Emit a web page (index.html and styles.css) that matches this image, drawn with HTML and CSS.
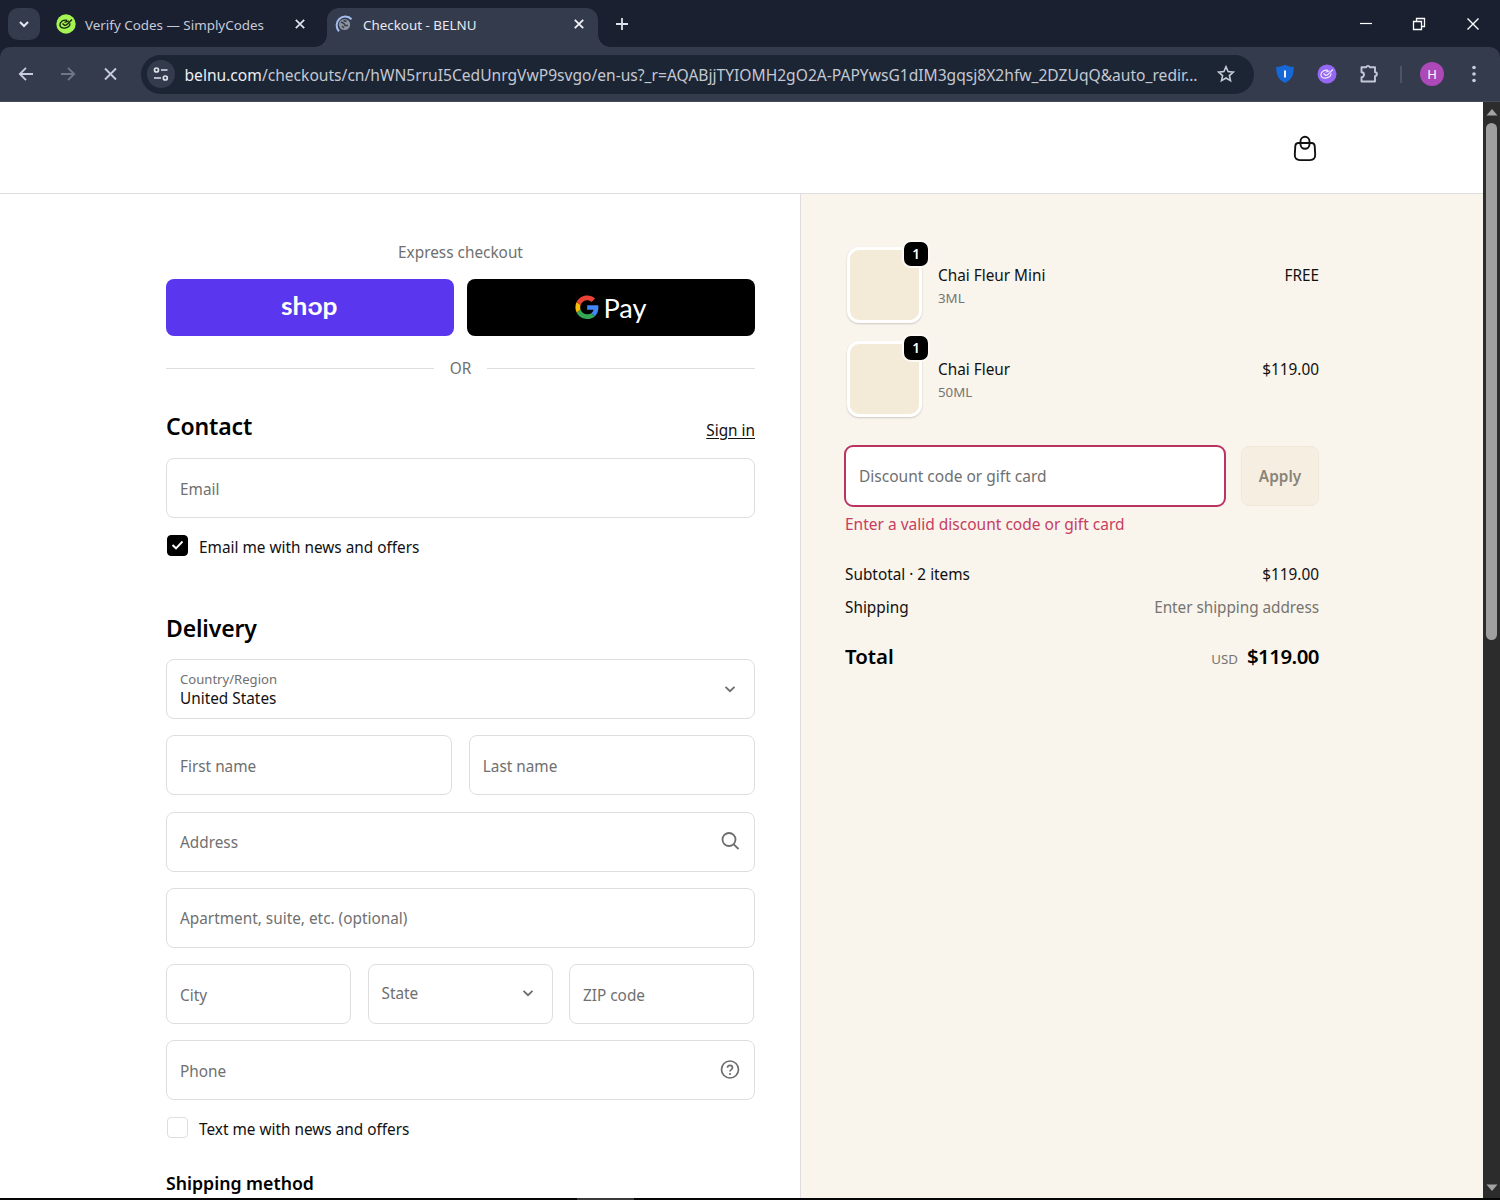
FILE: index.html
```
<!DOCTYPE html>
<html lang="en">
<head>
    <meta charset="UTF-8">
    <meta name="viewport" content="width=device-width, initial-scale=1.0">
    <title>Checkout - BELNU</title>
    <link rel="stylesheet" href="styles.css">
</head>
<body>
    <div class="tabs">
        <div class="tab-search">
            <svg width="12" height="8" viewBox="0 0 12 8"><path d="M2 2l4 4 4-4" fill="none" stroke="#e4e8f2" stroke-width="2"/></svg>
        </div>
        <div class="tab">
            <svg width="20" height="20" viewBox="0 0 20 20">
                <circle cx="10" cy="10" r="9.7" fill="#a5f453"/>
                <path d="M11 6.300c-4-.8-7.200 1.700-7.100 4.700.1 2.700 3 3.600 5.700 2.900 2.800-.7 4.600-2.300 4.300-4.600M6.500 9.500l2 1.800c1.500.2 2.500-.5 3.300-1.600l4.200-4.200M8.500 8.300l4.200-1.500" fill="none" stroke="#16240d" stroke-width="1.400"/>
            </svg>
            <span class="tab-name">Verify Codes — SimplyCodes</span>
            <svg class="tab-x" width="12" height="12" viewBox="0 0 12 12"><path d="M1.800 1.800l8.400 8.400M10.200 1.800l-8.400 8.400" stroke="#dfe3ee" stroke-width="1.700"/></svg>
        </div>
        <div class="tab active">
            <svg width="20" height="20" viewBox="0 0 20 20">
                <circle cx="10.500" cy="10.500" r="5.600" fill="#8d939f"/>
                <path d="M7 8l3 1.500 1 2h3M9.500 6.500l3 1M8 12l2 2" fill="none" stroke="#343c4d" stroke-width="1.500"/>
                <path d="M5 17.200A8.400 8.400 0 1 1 17.500 5.300" fill="none" stroke="#a5bff0" stroke-width="2"/>
            </svg>
            <span class="tab-name">Checkout - BELNU</span>
            <svg class="tab-x" width="12" height="12" viewBox="0 0 12 12"><path d="M1.800 1.800l8.400 8.400M10.200 1.800l-8.400 8.400" stroke="#f0f2f8" stroke-width="1.800"/></svg>
        </div>
        <svg class="new-tab" width="14" height="14" viewBox="0 0 14 14"><path d="M7 1v12M1 7h12" stroke="#dfe3ee" stroke-width="1.800"/></svg>
        <div class="window-buttons">
            <svg width="12" height="12" viewBox="0 0 12 12"><path d="M0 5.500h12" stroke="#fff" stroke-width="1.200"/></svg>
            <svg width="14" height="14" viewBox="0 0 14 14"><path d="M1.500 4.500h8v8h-8zM4.500 4.500v-3h8v8h-3" fill="none" stroke="#fff" stroke-width="1.300"/></svg>
            <svg width="14" height="14" viewBox="0 0 14 14"><path d="M1.500 1.500l11 11M12.500 1.500l-11 11" stroke="#fff" stroke-width="1.400"/></svg>
        </div>
    </div>

    <div class="toolbar">
        <div class="nav-icons">
            <svg width="16" height="16" viewBox="0 0 16 16"><path d="M15 8H2M8 1.800L1.800 8 8 14.200" fill="none" stroke="#c8cedc" stroke-width="1.800"/></svg>
            <svg width="16" height="16" viewBox="0 0 16 16"><path d="M1 8h13M8 1.800L14.200 8 8 14.200" fill="none" stroke="#6f7686" stroke-width="1.800"/></svg>
            <svg width="16" height="16" viewBox="0 0 16 16"><path d="M3 2.500l11 11M14 2.500l-11 11" stroke="#c8cedc" stroke-width="1.800"/></svg>
        </div>
        <div class="omnibox">
            <div class="site-info">
                <svg width="16" height="14" viewBox="0 0 16 14"><g fill="none" stroke="#dde1ea" stroke-width="1.700"><circle cx="3.500" cy="3" r="2"/><path d="M8 3h6.500M1 11h7"/><circle cx="12.300" cy="11" r="2"/></g></svg>
            </div>
            <span class="url"><b>belnu.com</b>/checkouts/cn/hWN5rruI5CedUnrgVwP9svgo/en-us?_r=AQABjjTYIOMH2gO2A-PAPYwsG1dIM3gqsj8X2hfw_2DZUqQ&amp;auto_redir...</span>
            <svg class="star" width="20" height="20" viewBox="0 0 20 20"><path d="M10 2.800l2.100 4.800 5.200.5-3.900 3.500 1.100 5.100L10 14l-4.500 2.700 1.100-5.100-3.900-3.500 5.200-.5z" fill="none" stroke="#c6cbd8" stroke-width="1.600"/></svg>
        </div>
        <div class="extensions">
            <svg width="20" height="20" viewBox="0 0 20 20"><path d="M10 .8c2 1.200 5 2 8.700 2.200.3 7-1.500 12.500-8.700 16C2.800 15.500 1 10 1.300 3 5 2.800 8 2 10 .8z" fill="#1668d8"/><path d="M10 6.500v7" stroke="#fff" stroke-width="1.900"/></svg>
            <svg width="20" height="20" viewBox="0 0 20 20">
                <circle cx="10" cy="10" r="9.500" fill="#9468f3"/>
                <path d="M11 6.300c-4-.8-7.200 1.700-7.100 4.700.1 2.700 3 3.600 5.700 2.900 2.800-.7 4.600-2.300 4.300-4.600M6.500 9.500l2 1.800c1.500.2 2.500-.5 3.300-1.600l4.200-4.200M8.500 8.300l4.200-1.500" fill="none" stroke="#f0e8ff" stroke-width="1.200"/>
            </svg>
            <svg width="20" height="20" viewBox="0 0 20 20"><path d="M2.500 3.200h4.700a1.900 1.900 0 0 1 3.600 0h5.200v5a1.900 1.900 0 0 1 0 3.800v5.500H2.500v-4.300a2.200 2.200 0 0 0 0-5z" fill="none" stroke="#c2c8d6" stroke-width="1.900" stroke-linejoin="round"/></svg>
            <span class="separator"></span>
            <span class="avatar">H</span>
            <svg width="6" height="18" viewBox="0 0 6 18" fill="#c8cedc"><circle cx="3" cy="2.500" r="1.800"/><circle cx="3" cy="9" r="1.800"/><circle cx="3" cy="15.500" r="1.800"/></svg>
        </div>
    </div>

    <div class="window">
        <div class="page">
            <header>
                <svg width="24" height="27" viewBox="0 0 24 27"><g fill="none" stroke="#111" stroke-width="1.900"><path d="M5.500 8h13q3 0 3.200 3l.5 8.500q.2 5.600-5.200 5.600H7q-5.400 0-5.200-5.600l.5-8.500q.2-3 3.200-3z"/><rect x="7.500" y="1.800" width="9" height="12" rx="4.500"/></g></svg>
            </header>
            <main>
                <div class="form">
                    <p class="express">Express checkout</p>
                    <div class="pay-buttons">
                        <div class="pay shop">
                            <svg width="60" height="34" viewBox="0 0 60 34">
                                <text x="1" y="23.500" font-size="25.500" textLength="56.500" lengthAdjust="spacingAndGlyphs">shop</text>
                                <path d="M27.500 16.500h6" stroke="#5a37ef" stroke-width="2"/>
                            </svg>
                        </div>
                        <div class="pay gpay">
                            <svg width="74" height="36" viewBox="0 0 74 36">
                                <g transform="translate(1.400 5.500) scale(.49)">
                                    <path fill="#4285f4" d="M46.980 24.550c0-1.570-.15-3.090-.38-4.550H24v9.020h12.940c-.58 2.960-2.260 5.480-4.780 7.180l7.730 6c4.510-4.180 7.090-10.360 7.090-17.650z"/>
                                    <path fill="#34a853" d="M24 48c6.480 0 11.930-2.130 15.890-5.810l-7.730-6c-2.150 1.450-4.920 2.300-8.160 2.300-6.260 0-11.570-4.220-13.470-9.910l-7.980 6.190C6.510 42.620 14.620 48 24 48z"/>
                                    <path fill="#fbbc05" d="M10.530 28.590c-.48-1.450-.76-2.990-.76-4.590s.27-3.140.76-4.590l-7.980-6.190C.92 16.460 0 20.120 0 24s.92 7.540 2.560 10.780z"/>
                                    <path fill="#ea4335" d="M24 9.500c3.540 0 6.710 1.220 9.210 3.600l6.850-6.850C35.900 2.380 30.470 0 24 0 14.620 0 6.510 5.380 2.560 13.220l7.980 6.190C12.430 13.720 17.740 9.500 24 9.500z"/>
                                </g>
                                <text x="29.500" y="28" font-size="27.500" textLength="43" lengthAdjust="spacingAndGlyphs">Pay</text>
                            </svg>
                        </div>
                    </div>
                    <div class="or"><span>OR</span></div>

                    <div class="section-head">
                        <h2>Contact</h2>
                        <a class="sign-in">Sign in</a>
                    </div>
                    <div class="field"><span>Email</span></div>
                    <div class="check-row">
                        <span class="checkbox checked"><svg width="13" height="10" viewBox="0 0 13 10"><path d="M1.500 5l3.500 3.300L11.500 1.500" fill="none" stroke="#fff" stroke-width="1.900"/></svg></span>
                        <span>Email me with news and offers</span>
                    </div>

                    <h2 class="delivery">Delivery</h2>
                    <div class="fields">
                        <div class="field country">
                            <div class="stack">
                                <small>Country/Region</small>
                                <span class="value">United States</span>
                            </div>
                            <svg width="14" height="10" viewBox="0 0 14 10"><path d="M2.500 2.800L7 7.200l4.500-4.400" fill="none" stroke="#6d6d6d" stroke-width="1.800"/></svg>
                        </div>
                        <div class="row two">
                            <div class="field"><span>First name</span></div>
                            <div class="field"><span>Last name</span></div>
                        </div>
                        <div class="field">
                            <span>Address</span>
                            <svg width="20" height="20" viewBox="0 0 20 20"><g fill="none" stroke="#6d6d6d" stroke-width="1.800"><circle cx="9" cy="8.500" r="6.500"/><path d="M13.500 13.200l5 4.800"/></g></svg>
                        </div>
                        <div class="field"><span>Apartment, suite, etc. (optional)</span></div>
                        <div class="row three">
                            <div class="field"><span>City</span></div>
                            <div class="field state">
                                <span>State</span>
                                <svg width="14" height="10" viewBox="0 0 14 10"><path d="M2.500 2.800L7 7.200l4.500-4.400" fill="none" stroke="#6d6d6d" stroke-width="1.800"/></svg>
                            </div>
                            <div class="field"><span>ZIP code</span></div>
                        </div>
                        <div class="field">
                            <span>Phone</span>
                            <svg width="20" height="20" viewBox="0 0 20 20"><g fill="none" stroke="#6d6d6d" stroke-width="1.700"><circle cx="10" cy="9.500" r="8.500"/><path d="M7.500 7.800c0-3.400 5-3.200 5 0 0 1.900-2.500 1.700-2.500 3.600"/></g><circle cx="10" cy="14" r="1.100" fill="#6d6d6d"/></svg>
                        </div>
                    </div>
                    <div class="check-row">
                        <span class="checkbox"></span>
                        <span>Text me with news and offers</span>
                    </div>
                    <h3>Shipping method</h3>
                </div>

                <div class="summary">
                    <div class="item">
                        <div class="thumb"><span class="badge">1</span></div>
                        <div class="item-text">
                            <span>Chai Fleur Mini</span>
                            <small>3ML</small>
                        </div>
                        <span class="price">FREE</span>
                    </div>
                    <div class="item">
                        <div class="thumb"><span class="badge">1</span></div>
                        <div class="item-text">
                            <span>Chai Fleur</span>
                            <small>50ML</small>
                        </div>
                        <span class="price">$119.00</span>
                    </div>
                    <div class="discount">
                        <div class="code"><span>Discount code or gift card</span></div>
                        <div class="apply">Apply</div>
                    </div>
                    <p class="error">Enter a valid discount code or gift card</p>
                    <div class="line"><span>Subtotal · 2 items</span><span>$119.00</span></div>
                    <div class="line"><span>Shipping</span><span class="muted">Enter shipping address</span></div>
                    <div class="total"><strong>Total</strong><span><small>USD</small><strong class="amount">$119.00</strong></span></div>
                </div>
            </main>
        </div>
        <div class="scrollbar">
            <svg width="12" height="7" viewBox="0 0 12 7"><path d="M6 0l5.500 6.500H.5z" fill="#a3a3a3"/></svg>
            <div class="thumb-bar"></div>
            <svg width="12" height="7" viewBox="0 0 12 7"><path d="M6 7L.5.5h11z" fill="#a3a3a3"/></svg>
        </div>
    </div>
    <div class="taskbar-edge"><span></span></div>
</body>
</html>
```
FILE: styles.css
```
* {
    box-sizing: border-box;
}

body {
    margin: 0;
    height: 1200px;
    overflow: hidden;
    display: flex;
    flex-direction: column;
    background: #1a2030;
    font-family: "Noto Sans", "Open Sans", sans-serif;
    font-size: 15.35px;
    color: #111;
}

svg {
    display: block;
    flex: none;
}

p, h2, h3 {
    margin: 0;
}

span, small, strong, a {
    white-space: nowrap;
}

/* tab strip */
.tabs {
    display: flex;
    height: 47px;
    padding-left: 8px;
    flex: none;
}

.tab-search {
    width: 32px;
    height: 32px;
    margin-top: 8px;
    border-radius: 10px;
    background: #343b4d;
    display: flex;
    align-items: center;
    justify-content: center;
}

.tab {
    display: flex;
    align-items: center;
    width: 273px;
    height: 32px;
    margin-top: 8px;
    padding: 0 7px 0 16px;
    color: #c5cad8;
    font-size: 13.4px;
}

.tab.active {
    position: relative;
    width: 271px;
    height: 39px;
    margin-left: 14px;
    padding: 0 13px 7px 7px;
    border-radius: 12px 12px 0 0;
    background: #343b4d;
    color: #e6e9f2;
}

.tab.active::before,
.tab.active::after {
    content: "";
    position: absolute;
    bottom: 0;
    width: 12px;
    height: 12px;
}

.tab.active::before {
    left: -12px;
    background: radial-gradient(circle at 0 0, transparent 11.5px, #343b4d 12px);
}

.tab.active::after {
    right: -12px;
    background: radial-gradient(circle at 100% 0, transparent 11.5px, #343b4d 12px);
}

.tab-name {
    margin-left: 9px;
    padding-top: 1px;
}

.tab-x {
    margin-left: auto;
}

.new-tab {
    margin: 17px 0 0 17px;
}

.window-buttons {
    display: flex;
    align-items: center;
    gap: 40px;
    margin-left: auto;
    padding-right: 20px;
    height: 47px;
}

/* toolbar */
.toolbar {
    display: flex;
    align-items: center;
    flex: none;
    height: 55px;
    padding-left: 18px;
    background: #343b4d;
    border-radius: 10px 10px 0 0;
    border-bottom: 1px solid #454b5a;
}

.nav-icons {
    display: flex;
    gap: 26px;
}

.omnibox {
    display: flex;
    align-items: center;
    width: 1113px;
    height: 39px;
    margin-left: 23px;
    padding: 0 18px 0 6px;
    border-radius: 20px;
    background: #1c2534;
}

.site-info {
    display: flex;
    align-items: center;
    justify-content: center;
    width: 28px;
    height: 28px;
    border-radius: 50%;
    background: #343b4d;
}

.url {
    margin-left: 9.5px;
    padding-top: 1px;
    color: #c3c8d3;
    font-size: 15.6px;
}

.url b {
    font-weight: 400;
    color: #eceff5;
}

.star {
    margin-left: auto;
}

.extensions {
    display: flex;
    align-items: center;
    margin-left: 21px;
    gap: 22px;
}

.separator {
    width: 2px;
    height: 17px;
    margin: 0 -4px 0 -1px;
    background: #4d5466;
}

.avatar {
    width: 24px;
    height: 24px;
    border-radius: 50%;
    background: #ad48b8;
    color: #fff;
    font-size: 13px;
    line-height: 24px;
    text-align: center;
}

.extensions svg:last-child {
    margin-left: 5px;
}

/* page */
.window {
    display: flex;
    height: 1096px;
    flex: none;
}

.page {
    width: 1483px;
    background: #fff;
}

header {
    display: flex;
    justify-content: flex-end;
    height: 92px;
    padding: 33px 166px 0 0;
    border-bottom: 1px solid #dedede;
}

main {
    display: flex;
    height: 1004px;
}

.form {
    width: 800px;
    height: 1004px;
    overflow: hidden;
    padding: 46px 45px 0 166px;
}

.express {
    height: 24px;
    line-height: 24px;
    text-align: center;
    color: #707070;
}

.pay-buttons {
    display: flex;
    gap: 13px;
    margin-top: 15px;
}

.pay {
    flex: 1;
    height: 57px;
    display: flex;
    align-items: center;
    justify-content: center;
    border-radius: 8px;
}

.shop {
    background: #5a37ef;
}

.shop text {
    font-family: Lato, sans-serif;
    font-weight: 700;
    fill: #fff;
}

.gpay {
    background: #000;
}

.gpay text {
    font-family: Lato, sans-serif;
    fill: #fff;
}

.or {
    display: flex;
    align-items: center;
    gap: 16px;
    height: 24px;
    margin-top: 20px;
    color: #707070;
}

.or::before,
.or::after {
    content: "";
    flex: 1;
    height: 1px;
    background: #dedede;
}

.section-head {
    display: flex;
    justify-content: space-between;
    height: 32px;
    margin-top: 30px;
    margin-bottom: 16px;
}

h2 {
    font-size: 23px;
    font-weight: 600;
    line-height: 32px;
    letter-spacing: -0.15px;
    color: #000;
}

.sign-in {
    margin-top: 8px;
    line-height: 24px;
    text-decoration: underline;
    text-underline-offset: 2px;
}

.field {
    display: flex;
    align-items: center;
    justify-content: space-between;
    height: 60px;
    padding: 1px 14px 0 13px;
    border: 1px solid #dedede;
    border-radius: 8px;
    color: #707070;
}

.field svg {
    margin-top: -2px;
}

.check-row {
    display: flex;
    align-items: center;
    gap: 11px;
    height: 24px;
    margin-top: 15px;
    padding-left: 1px;
}

.check-row span:last-child {
    margin-top: 4px;
}

.checkbox {
    display: flex;
    align-items: center;
    justify-content: center;
    width: 21px;
    height: 21px;
    border: 1px solid #dedede;
    border-radius: 4px;
}

.checked {
    background: #000;
    border-color: #000;
}

.delivery {
    margin-top: 55px;
    margin-bottom: 15px;
}

.fields {
    display: flex;
    flex-direction: column;
    gap: 16.25px;
}

.country {
    padding-top: 0;
}

.country svg,
.state svg {
    margin-top: 0;
    margin-right: 3px;
}

.stack {
    display: flex;
    flex-direction: column;
}

.stack small {
    font-size: 13.1px;
    line-height: 18px;
}

.value {
    line-height: 21px;
    color: #111;
}

.row {
    display: grid;
    gap: 16.5px;
}

.two {
    grid-template-columns: 1fr 1fr;
}

.three {
    grid-template-columns: 1fr 1fr 1fr;
    padding-right: 1px;
}

.state {
    padding-top: 0;
    padding-bottom: 2px;
}

h3 {
    margin-top: 30px;
    font-size: 17.7px;
    line-height: 28px;
    font-weight: 600;
    color: #000;
}

/* order summary */
.summary {
    width: 683px;
    padding: 45px 164px 0 44px;
    background: #f9f4ec;
    border-left: 1px solid #dedede;
}

.item {
    display: flex;
    height: 94px;
    padding-top: 8px;
    padding-left: 2px;
}

.thumb {
    position: relative;
    width: 75px;
    height: 76px;
    border: 3px solid #fff;
    border-radius: 12px;
    background: #f3ebd8;
    box-shadow: 0 1px 2px rgba(0, 0, 0, 0.18);
}

.badge {
    position: absolute;
    top: -8px;
    right: -9px;
    width: 24px;
    height: 24px;
    border-radius: 7px;
    background: #000;
    box-shadow: 0 0 0 2px #fdfaf5;
    color: #fff;
    font-size: 13.5px;
    font-weight: 600;
    line-height: 24px;
    text-align: center;
}

.item-text {
    display: flex;
    flex-direction: column;
    margin-left: 16px;
    padding-top: 16px;
    line-height: 24px;
}

.item-text small {
    font-size: 13.3px;
    line-height: 22px;
    color: #777570;
}

.price {
    margin-left: auto;
    margin-top: 16px;
    line-height: 24px;
}

.discount {
    display: flex;
    gap: 15px;
    margin: 18px 0 0 -1px;
}

.code {
    display: flex;
    align-items: center;
    width: 382px;
    height: 62px;
    padding-left: 13px;
    border: 2px solid #b93460;
    border-radius: 9px;
    background: #fff;
    color: #707070;
    font-size: 15.5px;
}

.apply {
    width: 78px;
    height: 60px;
    margin-top: 1px;
    border: 1px solid #f0e8db;
    border-radius: 8px;
    background: #f6eee1;
    color: #8a8578;
    font-weight: 600;
    line-height: 59px;
    text-align: center;
}

.error {
    height: 24px;
    margin: 5px 0 20px;
    font-size: 15.5px;
    line-height: 24px;
    color: #c73e5f;
}

.line {
    display: flex;
    justify-content: space-between;
    height: 33px;
    padding-top: 6px;
    line-height: 24px;
}

.muted {
    color: #777570;
    letter-spacing: -0.05px;
}

.total {
    display: flex;
    justify-content: space-between;
    align-items: baseline;
    margin-top: 18px;
    line-height: 32px;
    font-size: 20.4px;
    color: #000;
}

.total strong {
    font-weight: 600;
}

.total .amount {
    letter-spacing: -0.5px;
}

.total small {
    margin-right: 9px;
    font-size: 13.3px;
    color: #777570;
}

/* scrollbar */
.scrollbar {
    display: flex;
    flex-direction: column;
    align-items: center;
    width: 17px;
    padding: 7px 0;
    background: #2c2c2c;
}

.thumb-bar {
    width: 11px;
    height: 517px;
    margin: 7px 0 auto;
    border-radius: 6px;
    background: #9f9f9f;
}

.taskbar-edge {
    flex: 1;
    padding-left: 577px;
    background: #050505;
}

.taskbar-edge span {
    display: block;
    width: 57px;
    height: 2px;
    background: #3a3a3a;
}
```
